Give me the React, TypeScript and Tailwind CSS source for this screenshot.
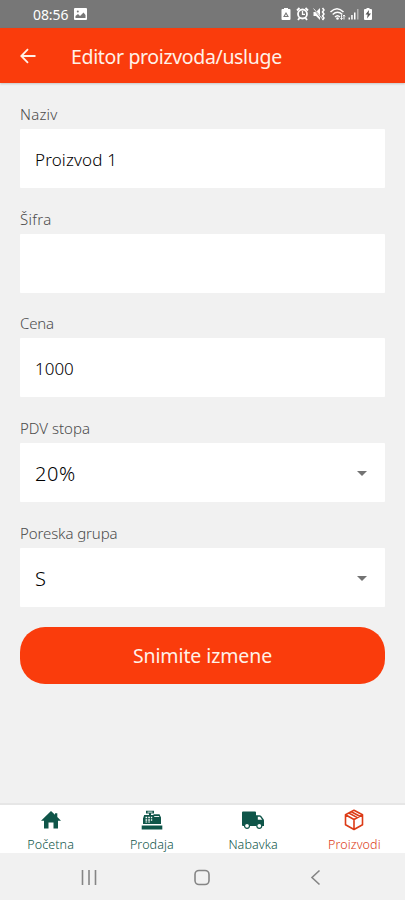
import React from 'react';

const Field = ({ label, value, gap, select = false, labelSpacing = '', size }: { label: string; value: string; gap: string; select?: boolean; labelSpacing?: string; size: string }) => (
  <div className={gap}>
    <div className="flex h-[31px] items-center">
      <span className={`text-[15px] leading-[20px] font-light text-[#4c4c4c] ${labelSpacing}`}>{label}</span>
    </div>
    <div className="flex h-[59px] items-center justify-between rounded-[1px] bg-white pt-px pr-[18px] pl-[15px]">
      <span className={`pt-px ${size}`}>{value}</span>
      {select && (
        <svg width="10" height="5" viewBox="0 0 10 5" fill="#737373"><path d="M0 0h10L5 5z" /></svg>
      )}
    </div>
  </div>
);

const Tab = ({ label, color, children }: { label: string; color: string; children: React.ReactNode }) => (
  <div className={`flex flex-1 flex-col items-center ${color}`}>
    <div className="flex h-[30px] shrink-0 items-center justify-center">{children}</div>
    <span className="mt-px text-[12.5px] leading-[18px] font-[350] tracking-[0.1px]">{label}</span>
  </div>
);

export default function App() {
  return (
    <div className="flex h-[900px] w-[405px] flex-col overflow-hidden bg-[#f1f1f1] font-['Noto_Sans',sans-serif] text-black">
      <div className="flex h-[28px] items-center bg-[#777] pl-[33px] text-white">
        <span className="w-[41px] pt-px text-[14px] leading-[20px] tracking-[-0.1px]">08:56</span>
        <svg width="13" height="12" viewBox="0 0 13 12"><rect width="13" height="12" rx="1" fill="#fff" /><path d="M1.500 10V8l2.500-2 2 2L9.500 4.500 11.500 7v3z" fill="#777" /><circle cx="3.800" cy="3.500" r="1" fill="#777" /></svg>
        <svg className="ml-[194px]" width="92" height="14" viewBox="281 7 92 14" fill="#fff">
          <path d="M281.500 10q0-1 1-1h1.500V8h4v1h1.500q1 0 1 1v9q0 1-1 1h-7q-1 0-1-1z" />
          <path d="M284 16.500l2-3.500 2 3.500z" fill="none" stroke="#777" strokeWidth="1.100" />
          <circle cx="302.500" cy="14" r="4.500" fill="none" stroke="#fff" strokeWidth="1.800" /><path d="M297 10.500l2.500-2.500M308 10.500l-2.500-2.500M299.500 18l-1.500 2M305.500 18l1.500 2" stroke="#fff" strokeWidth="1.800" /><path d="M302.500 11v3.300h2.500" fill="none" stroke="#fff" strokeWidth="1.300" />
          <path d="M313.500 12h2.500l4-4v12l-4-4h-2.500z" /><path d="M313 8l10 12" stroke="#777" strokeWidth="1.200" /><path d="M313.500 8.500l9.500 11" stroke="#fff" strokeWidth=".8" /><path d="M322.500 8l1.500 2-1.500 2 1.500 2-1.500 2 1.500 2-1.500 2" fill="none" stroke="#fff" strokeWidth="1.500" />
          <path d="M330.500 12q6.500-6.500 13 0M332.700 14.500q4.800-4.500 9.600 0M335 17q2.500-2.500 5 0" fill="none" stroke="#fff" strokeWidth="1.500" /><circle cx="337.500" cy="18.500" r="1.300" /><path d="M341.500 15v4.500m-1.200-1.300 1.200 1.300 1.200-1.300M344 19.500V15m-1.200 1.300L344 15l1.200 1.300" fill="none" stroke="#fff" strokeWidth=".9" />
          <path d="M348.500 17.500h1.500v2h-1.500zM351.200 15h1.500v4.500h-1.500zM354 12.500h1.500v7h-1.500z" /><path d="M357 9h1.500v10.500H357z" opacity=".45" />
          <path d="M364 10q0-1 1-1h1.500V8h3v1h1.500q1 0 1 1v9q0 1-1 1h-6q-1 0-1-1z" /><path d="M369 10l-3.500 4.500h2.200l-.7 4 4-5h-2.300z" fill="#555" />
        </svg>
      </div>
      <header className="flex h-[55px] items-center bg-[#fa3c0c] text-[#fff1e8] shadow-[0_1px_2px_rgba(0,0,0,0.18)]">
        <svg className="ml-[20px]" width="16" height="16" viewBox="0 0 16 16" fill="none" stroke="currentColor" strokeWidth="1.800"><path d="M15.500 8H1.500M8 1.200 1.300 8 8 14.800" /></svg>
        <h1 className="ml-[35px] pt-[2px] text-[19.5px] leading-[28px] tracking-[-0.35px] whitespace-nowrap">Editor proizvoda/usluge</h1>
      </header>
      <main className="flex flex-1 flex-col px-[20px]">
        <Field label="Naziv" value="Proizvod 1" gap="mt-[15px]" size="text-[17px] font-[350] tracking-[0.15px]" labelSpacing="tracking-[0.2px]" />
        <Field label="Šifra" value="" gap="mt-[15px]" size="text-[17px]" labelSpacing="tracking-[0.3px]" />
        <Field label="Cena" value="1000" gap="mt-[14px]" size="text-[17px] font-[350]" labelSpacing="tracking-[-0.2px]" />
        <Field label="PDV stopa" value="20%" gap="mt-[15px]" size="text-[20px] font-[350] tracking-[0.6px]" select />
        <Field label="Poreska grupa" value="S" gap="mt-[15px]" size="text-[20px] font-[350]" labelSpacing="tracking-[-0.1px]" select />
        <button className="mt-[20px] h-[57px] shrink-0 rounded-[25px] bg-[#fa3c0c] pt-px text-[19.5px] tracking-[-0.1px] text-[#fff1e8]">Snimite izmene</button>
      </main>
      <nav className="flex h-[50px] border-t-2 border-[#e6e6e6] bg-white">
        <Tab label="Početna" color="text-[#0f5549]">
          <svg width="20" height="18" viewBox="0 0 20 18" fill="currentColor"><path d="M10 0l4 3.800V2.200h2.300V6L20 9.800h-3V17.500h-4.500V11.500h-5v6H3V9.800H0z" /></svg>
        </Tab>
        <Tab label="Prodaja" color="text-[#0f5549]">
          <svg width="22" height="20" viewBox="0 0 22 20" fill="currentColor">
            <path d="M5 .8h8v2.700h-3V5h2l1-.7h5.500L20 7.500V14H2V8.500L3.200 5H8V3.500H5zM.7 15.500h20.600v4H.7z" />
            <path d="M6.500 2.100h5M13.200 6.500h5" stroke="#fff" strokeWidth=".9" />
            <path d="M4.500 6.700h1.700v1.500H4.500zM7.200 6.700h1.700v1.500H7.200zM9.900 6.700h1.300v1.500H9.900zM4.500 9.200h1.700v1.500H4.500zM7.200 9.200h1.700v1.500H7.200zM9.900 9.200h1.300v1.500H9.900zM4.500 11.600h1.700v1H4.500zM7.200 11.600h1.700v1H7.200z" fill="#fff" />
          </svg>
        </Tab>
        <Tab label="Nabavka" color="text-[#0f5549]">
          <svg width="24" height="24" viewBox="0 0 24 24"><path d="M2 3.500h12q1 0 1 1v2.700h3.500q1 0 1.700.9l2.400 3.200q.4.700.4 1.500V18H2q-1 0-1-1V4.500q0-1 1-1z" fill="currentColor" /><path d="M16.800 8.800h2.200l2.200 3h-4.400z" fill="#fff" /><g fill="#fff" stroke="currentColor" strokeWidth="1.200"><circle cx="6" cy="17.800" r="2.500" /><circle cx="18.300" cy="17.800" r="2.500" /></g></svg>
        </Tab>
        <Tab label="Proizvodi" color="text-[#dc3b16]">
          <svg width="20" height="22" viewBox="0 0 20 22" fill="none" stroke="currentColor" strokeWidth="1.800" strokeLinejoin="round"><path d="M10 1.200l8.500 4.500v10L10 20.500 1.500 15.700v-10zM1.500 5.800L10 10.500l8.500-4.700M10 10.500v10M4.800 4L13.300 8.600M7.300 2.700L15.800 7.200" strokeWidth="1.600" /></svg>
        </Tab>
      </nav>
      <div className="flex h-[47px] items-center">
        <svg width="405" height="47" viewBox="0 853 405 47" fill="none" stroke="#858585" strokeWidth="1.600"><path d="M82.500 870v15M89 870v15M95.500 870v15M319.500 870.500l-7.500 7 7.500 7" /><rect x="195" y="870.500" width="14" height="14" rx="4" /></svg>
      </div>
    </div>
  );
}
